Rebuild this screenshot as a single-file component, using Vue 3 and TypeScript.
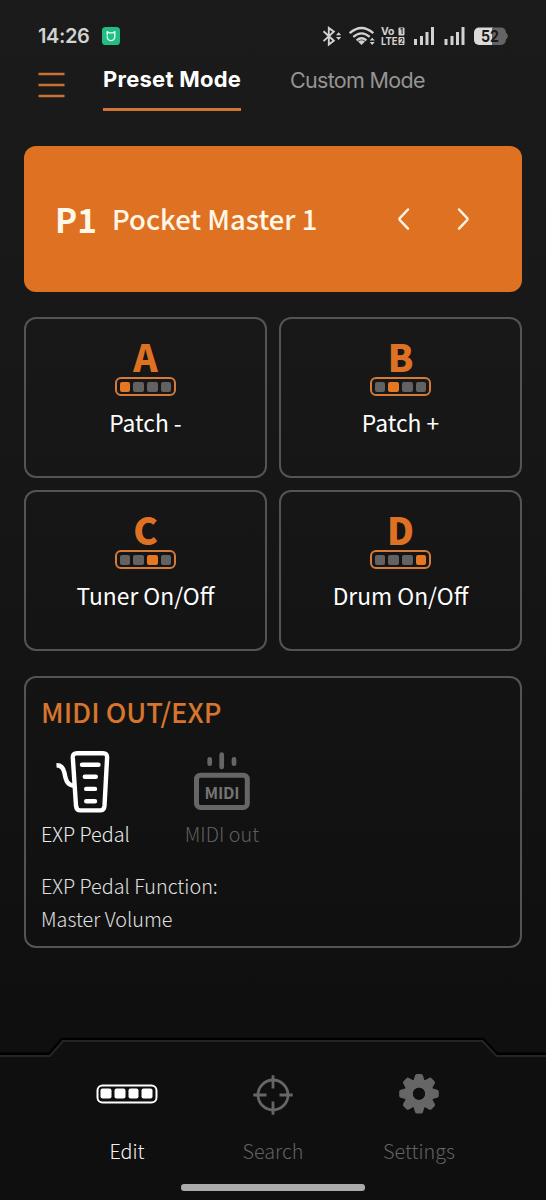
<script setup lang="ts">
interface Pad { letter: string; label: string; active: number }
const pads: Pad[] = [
  { letter: 'A', label: 'Patch -', active: 0 },
  { letter: 'B', label: 'Patch +', active: 1 },
  { letter: 'C', label: 'Tuner On/Off', active: 2 },
  { letter: 'D', label: 'Drum On/Off', active: 3 },
]
const cells = [0, 1, 2, 3]
const teeth = [0, 45, 90, 135, 180, 225, 270, 315]
</script>

<template>
  <main class="screen">
    <div class="status">
      <span class="time">14:26</span>
      <svg class="app-badge" width="18" height="18" viewBox="0 0 18 18">
        <rect width="18" height="18" rx="3.6" fill="#21bd82" />
        <path d="M5.200 8V4.700l1.900 1.200h3.800l1.900-1.200v5.100a3.800 3.800 0 0 1-7.600 0" fill="none" stroke="#e3fff3" stroke-width="1.400" stroke-linecap="round" stroke-linejoin="round" />
      </svg>
      <svg class="signals" width="188" height="22" viewBox="321 25 188 22">
        <g fill="none" stroke="#d2d2d2" stroke-width="1.9">
          <path d="M323.5 31.2l10.3 9.6-5 3.8V28l5 3.7-10.3 9.4" />
          <g stroke-width="2.3">
            <path d="M349.7 33.2Q361.500 22.800 373.300 33.200" />
            <path d="M353.300 36.900Q361.500 29.800 369.700 36.900" />
            <path d="M356.600 40.300Q361.500 36.200 366.400 40.300" />
          </g>
        </g>
        <g fill="#d2d2d2">
          <path d="M336 35.200l2.600-3 2.600 3zM336 37.100l2.600 3 2.600-3z" />
          <path d="M358 41.500q3.500-2.500 7 0l-3.500 3.500z" />
          <path d="M369.700 40.600l2.500-2.900 2.500 2.900zM369.700 42.100l2.500 2.900 2.500-2.900z" />
          <rect x="414" y="39" width="3" height="6" /><rect x="420" y="36" width="3" height="9" /><rect x="425.500" y="32" width="3" height="13" /><rect x="431" y="27" width="3" height="18" />
          <rect x="444.500" y="39" width="3" height="6" /><rect x="450.500" y="36" width="3" height="9" /><rect x="456" y="32" width="3" height="13" /><rect x="461.500" y="27" width="3" height="18" />
          <rect x="398.500" y="27.500" width="6" height="8" rx="1" /><rect x="398.500" y="37" width="6" height="8" rx="1" />
        </g>
        <g class="volte">
          <text x="381" y="35" textLength="13.500" lengthAdjust="spacingAndGlyphs">Vo</text>
          <text x="381" y="45" textLength="16.500" lengthAdjust="spacingAndGlyphs">LTE</text>
          <text class="sim" x="400" y="34.300">1</text>
          <text class="sim" x="399.300" y="43.800">2</text>
        </g>
        <path d="M479 27.500h14V45h-14a5 5 0 0 1-5-5v-7.500a5 5 0 0 1 5-5z" fill="#dadada" />
        <path d="M492 27.500h9q4.500 0 5 5.300 1.800.7 1.800 3.400t-1.800 3.400q-.5 5.400-5 5.400h-9z" fill="#646464" />
        <text class="battery" x="481" y="42" textLength="18" lengthAdjust="spacingAndGlyphs">52</text>
      </svg>
    </div>

    <header class="header">
      <svg class="burger" width="27" height="26" viewBox="0 0 27 26"><path d="M.5 2h26M.5 13h26M.5 24h26" stroke="#c97132" stroke-width="2.400" /></svg>
      <nav class="tabs">
        <span class="tab tab-on">Preset Mode</span>
        <span class="tab">Custom Mode</span>
      </nav>
    </header>

    <section class="hero">
      <strong class="slot">P1</strong>
      <span class="preset">Pocket Master 1</span>
      <svg class="arrows" width="74" height="24" viewBox="0 0 74 24">
        <path d="M11 2.500L2.800 11.200q-.8.900 0 1.800L11 21.700M62 2.500l8.200 8.700q.8.900 0 1.800L62 21.700" fill="none" stroke="#fff3e3" stroke-width="2.500" stroke-linecap="round" />
      </svg>
    </section>

    <section class="pads">
      <article v-for="pad in pads" :key="pad.letter" class="pad">
        <span class="letter">{{ pad.letter }}</span>
        <div class="strip"><i v-for="c in cells" :key="c" :class="{ on: c === pad.active }" /></div>
        <span class="pad-label">{{ pad.label }}</span>
      </article>
    </section>

    <section class="panel">
      <h2>MIDI OUT/EXP</h2>
      <div class="modes">
        <div class="mode">
          <svg width="56" height="64" viewBox="55 750 56 64" fill="none" stroke="#fff" stroke-width="4.400">
            <path d="M77 753.200h26q4.300 0 4.100 4.500l-2.600 48q-.4 4.700-4.500 4.700H80.500q-4.100 0-4.500-4.700l-3.200-48q-.2-4.500 4.200-4.500z" />
            <path d="M56.500 765.200q6.500-.2 8 7.800c1.300 7.500 2.800 12.200 9.800 12.700" />
            <path d="M82 764.700h16.500M84.800 776.800h11M86.200 788.900h8.800M86.200 801.200h8.800" stroke-linecap="round" />
          </svg>
          <span>EXP Pedal</span>
        </div>
        <div class="mode off">
          <svg width="58" height="64" viewBox="193 750 58 64" fill="none" stroke="#666" stroke-width="4.700">
            <rect x="196.500" y="775.200" width="50.800" height="32.200" rx="4" stroke-width="5" />
            <path d="M209.700 759.400v4.300M221.700 754.700v12.300M234 759.400v4.300" stroke-linecap="round" />
            <text class="midi" x="204.500" y="798.600" textLength="35" fill="#747474" stroke="none">MIDI</text>
          </svg>
          <span>MIDI out</span>
        </div>
      </div>
      <p>EXP Pedal Function:<br />Master Volume</p>
    </section>

    <footer class="bottom">
      <svg class="edge" width="546" height="24" viewBox="0 1036 546 24" fill="none">
        <path d="M0 1053.800h49l13-14.800h421l14 14.800h49" stroke="#000" stroke-width="2.400" />
        <path d="M0 1056h50l13-14.900h419.500l14 14.900H546" stroke="#252525" stroke-width="2" />
      </svg>
      <div class="items">
        <div class="item current">
          <div class="icon"><div class="strip white"><i v-for="c in cells" :key="c" /></div></div>
          <span>Edit</span>
        </div>
        <div class="item">
          <div class="icon">
            <svg width="42" height="42" viewBox="-21 -21 42 42" fill="none" stroke="#666" stroke-width="2.800">
              <circle r="15" /><path d="M0-19.700V-6.500M0 19.700V6.500M-19.700 0H-6.500M19.700 0H6.500" />
            </svg>
          </div>
          <span>Search</span>
        </div>
        <div class="item">
          <div class="icon gear">
            <svg width="42" height="42" viewBox="-21 -21 42 42">
              <g fill="#666"><path v-for="t in teeth" :key="t" :transform="`rotate(${t})`" d="M-5.800-12L-4-18.300q.4-1.500 1.900-1.500h4.200q1.500 0 1.900 1.500L5.800-12z" /></g>
              <circle r="10.300" fill="none" stroke="#666" stroke-width="8.600" />
              <circle r="6" fill="#0f0f0f" />
            </svg>
          </div>
          <span>Settings</span>
        </div>
      </div>
      <div class="home" />
    </footer>
  </main>
</template>

<style>
body { margin: 0; background: #0f0f0f; }
</style>

<style scoped>
.screen {
  width: 546px; height: 1200px; box-sizing: border-box; overflow: hidden;
  display: flex; flex-direction: column;
  background: linear-gradient(#1b1b1b, #171717 35%, #0f0f0f 85%);
  color: #fff; font-family: "Noto Sans CJK SC", "Noto Sans", sans-serif;
}
.status { height: 50px; margin-top: 11px; padding: 0 37px 0 38px; display: flex; align-items: center; }
.time { width: 63px; font: 600 20px/24px Inter, sans-serif; color: #d2d2d2; letter-spacing: -.4px; }
.app-badge { margin-left: 1px; }
.signals { margin-left: auto; }
.volte { font: 700 10px Inter, sans-serif; fill: #d2d2d2; }
.volte .sim { font-size: 7px; fill: #1b1b1b; }
.battery { font: 700 16px Inter, sans-serif; fill: #191919; }
.header { height: 85px; display: flex; padding-left: 38px; }
.burger { margin-top: 11px; margin-right: 38px; }
.tabs { display: flex; gap: 49px; height: 50px; }
.tab { font: 400 21.500px/38px Inter, sans-serif; letter-spacing: -.68px; color: #949494; white-space: nowrap; }
.tab-on { width: 138px; font-size: 22px; line-height: 37px; font-weight: 700; letter-spacing: .25px; color: #fff; border-bottom: 3px solid #cf7636; height: 47px; }
.hero {
  height: 146px; margin: 0 24px; border-radius: 12px; background: #df7222;
  display: flex; align-items: center; padding: 0 51px 0 31px; flex: none; color: #fff7e8;
}
.slot { width: 57px; font-size: 33.300px; font-weight: 700; line-height: 48px; }
.preset { font-size: 27.400px; font-weight: 500; line-height: 44px; padding-bottom: 2px; white-space: nowrap; }
.arrows { margin-left: auto; }
.pads { display: grid; grid-template-columns: 1fr 1fr; grid-template-rows: 161px 161px; gap: 12px; margin: 25px 24px; }
.pad { border: 2px solid #545454; border-radius: 12px; display: flex; flex-direction: column; align-items: center; padding-top: 17px; box-sizing: border-box; }
.letter { font-size: 37px; line-height: 40px; margin-bottom: 1px; font-weight: 900; color: #df7222; }
.strip { width: 61px; height: 19px; box-sizing: border-box; border: 2px solid #d47b38; border-radius: 6px; display: flex; justify-content: center; align-items: center; gap: 3px; }
.strip i { width: 10.600px; height: 10px; border-radius: 2px; background: #626262; }
.strip i.on { background: #e57820; }
.pad-label { margin-top: 9px; font-size: 22.800px; line-height: 36px; font-weight: 400; }
.panel { height: 272px; box-sizing: border-box; margin: 0 24px; border: 2px solid #545454; border-radius: 12px; padding: 13px 15px 0; flex: none; }
h2 { margin: 0; font-size: 27.300px; line-height: 40px; font-weight: 500; color: #d8752c; }
.modes { display: flex; margin-top: 19px; gap: 55px; }
.mode { font-size: 19.800px; line-height: 30px; font-weight: 300; color: #ececec; }
.mode svg { display: block; margin: 0 0 5px 14px; }
.mode.off { color: #5f5f5f; }
.mode.off svg { margin-left: 8px; }
.midi { font: 700 16px "Noto Sans CJK SC", sans-serif; }
p { margin: 20px 0 0; font-size: 19.800px; line-height: 33px; font-weight: 300; color: #e0e0e0; }
.bottom { margin-top: auto; height: 164px; display: flex; flex-direction: column; align-items: center; }
.edge { flex: none; }
.items { display: grid; grid-template-columns: repeat(3, 146px); height: 124px; }
.item { display: flex; flex-direction: column; align-items: center; font-size: 19.800px; line-height: 30px; font-weight: 300; color: #626262; }
.icon { height: 70px; padding-bottom: 6px; display: flex; align-items: center; }
.current .icon { transform: translate(-.5px, -1.500px); }
.gear { transform: translateY(-1.300px); }
.current { color: #f2f2f2; }
.strip.white { border-color: #fff; }
.strip.white i { background: #fff; }
.home { width: 184px; height: 7px; border-radius: 3px; background: #aaa; }
</style>
